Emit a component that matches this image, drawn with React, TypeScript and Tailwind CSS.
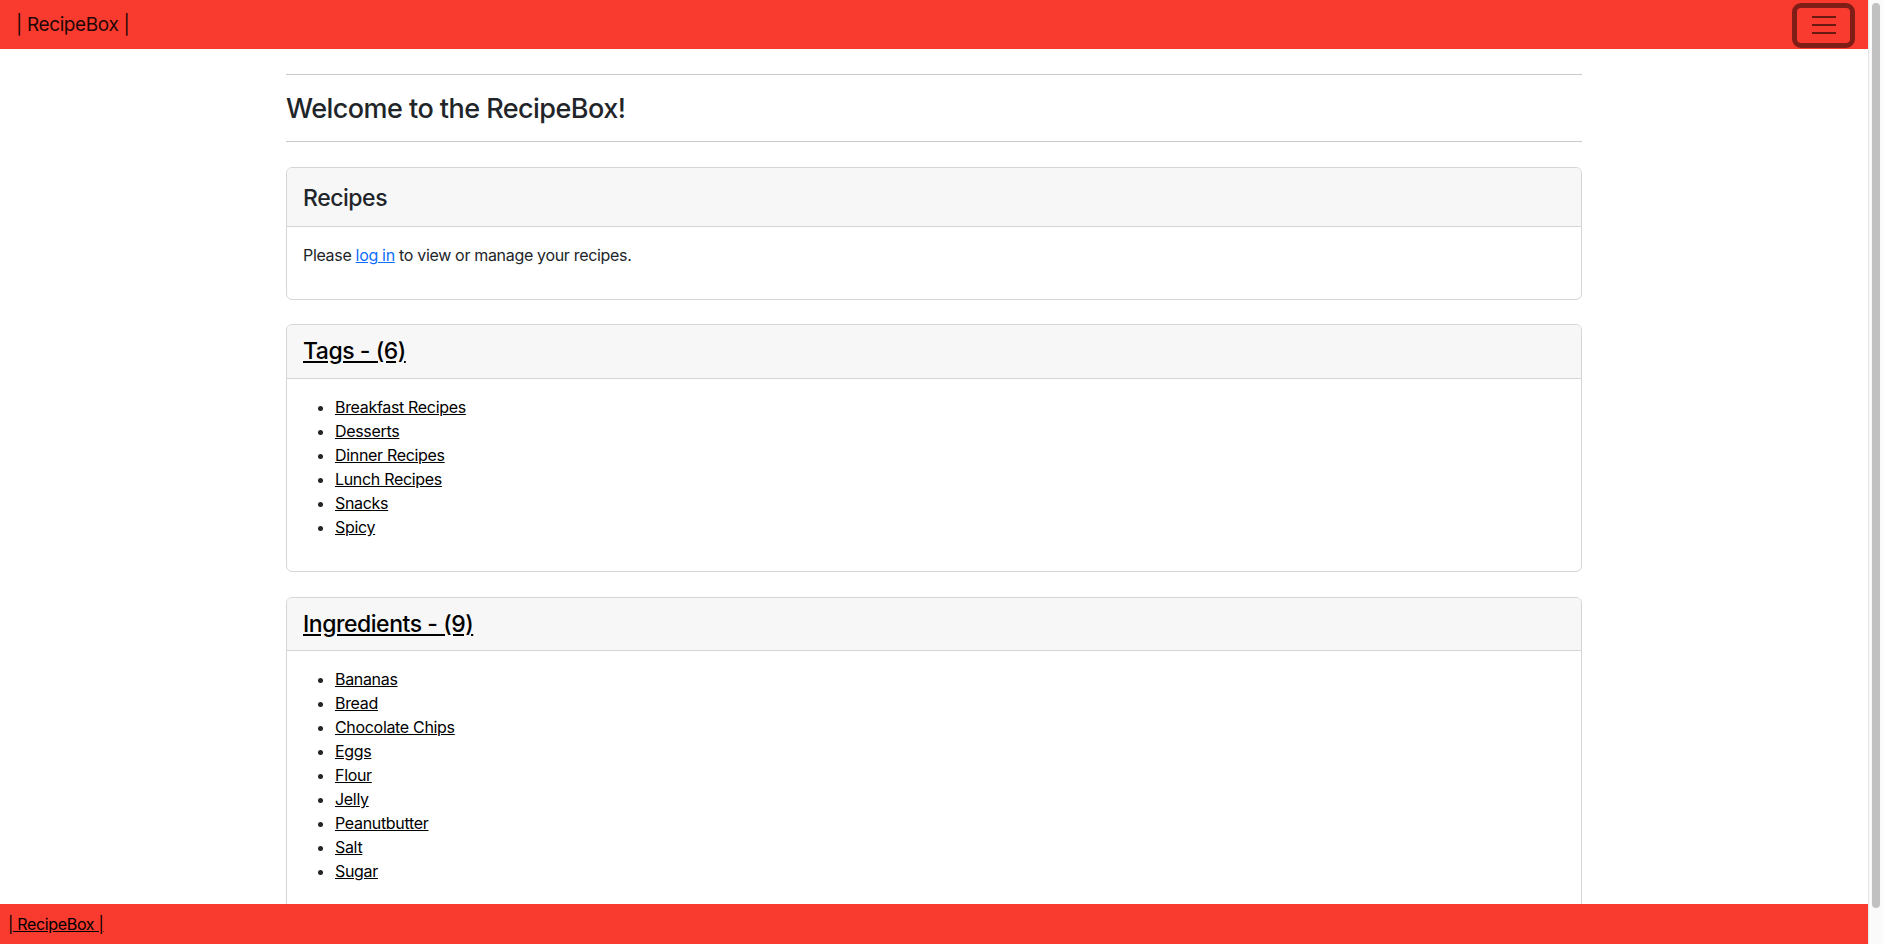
import React from 'react';

const tags = ['Breakfast Recipes', 'Desserts', 'Dinner Recipes', 'Lunch Recipes', 'Snacks', 'Spicy'];
const ingredients = ['Bananas', 'Bread', 'Chocolate Chips', 'Eggs', 'Flour', 'Jelly', 'Peanutbutter', 'Salt', 'Sugar'];

const LinkList = ({ items }: { items: string[] }) => (
  <ul className="list-disc pl-8 text-[16px] leading-[24px] tracking-[-0.02em]">
    {items.map((item) => (
      <li key={item}>
        <a href="#" className="underline text-black">{item}</a>
      </li>
    ))}
  </ul>
);

export default function App() {
  return (
    <div className="h-screen flex bg-white text-[#212529] font-['Inter',sans-serif] overflow-hidden">
      <div className="flex-1 flex flex-col min-w-0">
        {/* top navbar */}
        <nav className="h-[49px] shrink-0 bg-[#f93a2e] flex items-center justify-between pl-[16px] pr-[13px]">
          <a href="#" className="mt-[2px] text-[19px] tracking-[-0.02em] text-black/90">| RecipeBox |</a>
          <button className="w-[63px] h-[45px] mt-[1px] rounded-[9px] border-[5px] border-[#7e1e17] flex items-center justify-center">
            <svg width="24" height="20" viewBox="0 0 24 20">
              <path d="M0 2h24M0 10h24M0 18h24" stroke="#6b1913" strokeWidth="2" />
            </svg>
          </button>
        </nav>

        <main className="flex-1 overflow-hidden">
          <div className="max-w-[1320px] mx-auto px-3 pt-[25px]">
            <hr className="border-[#c8c9ca]" />
            <h3 className="mt-[17px] mb-[15px] text-[27px] leading-[34px] font-medium tracking-[-0.02em]">Welcome to the RecipeBox!</h3>
            <hr className="border-[#c8c9ca]" />

            {/* recipes */}
            <div className="mt-[25px] border border-[#d5d5d5] rounded-[6px] overflow-hidden">
              <div className="h-[59px] bg-[#f7f7f7] border-b border-[#d5d5d5] flex items-center px-4">
                <h4 className="mt-[2px] text-[23px] font-medium leading-[29px] tracking-[-0.02em]">Recipes</h4>
              </div>
              <div className="px-4 pt-4 pb-8 text-[16px] leading-[24px] tracking-[-0.02em]">
                Please <a href="#" className="text-[#0d6efd] underline">log in</a> to view or manage your recipes.
              </div>
            </div>

            {/* tags */}
            <div className="mt-6 border border-[#d5d5d5] rounded-[6px] overflow-hidden">
              <div className="h-[54px] bg-[#f7f7f7] border-b border-[#d5d5d5] flex items-center px-4">
                <a href="#" className="text-[23px] font-medium leading-[29px] tracking-[-0.02em] underline text-black">Tags - (6)</a>
              </div>
              <div className="px-4 pt-4 pb-8">
                <LinkList items={tags} />
              </div>
            </div>

            {/* ingredients */}
            <div className="mt-[25px] mb-6 border border-[#d5d5d5] rounded-[6px] overflow-hidden">
              <div className="h-[53px] bg-[#f7f7f7] border-b border-[#d5d5d5] flex items-center px-4">
                <a href="#" className="text-[23px] font-medium leading-[29px] tracking-[-0.02em] underline text-black">Ingredients - (9)</a>
              </div>
              <div className="px-4 pt-4 pb-8">
                <LinkList items={ingredients} />
              </div>
            </div>
          </div>
        </main>

        <footer className="h-[40px] shrink-0 bg-[#f93a2e] flex items-center px-2">
          <a href="#" className="underline text-black text-[16px] tracking-[-0.02em]">| RecipeBox |</a>
        </footer>
      </div>

      {/* scrollbar */}
      <div className="w-[15px] shrink-0 bg-[#fafafa] border-l border-[#e6e6e6] flex justify-center pt-[3px]">
        <div className="w-[8px] h-[905px] rounded-full bg-[#c1c1c1]" />
      </div>
    </div>
  );
}
